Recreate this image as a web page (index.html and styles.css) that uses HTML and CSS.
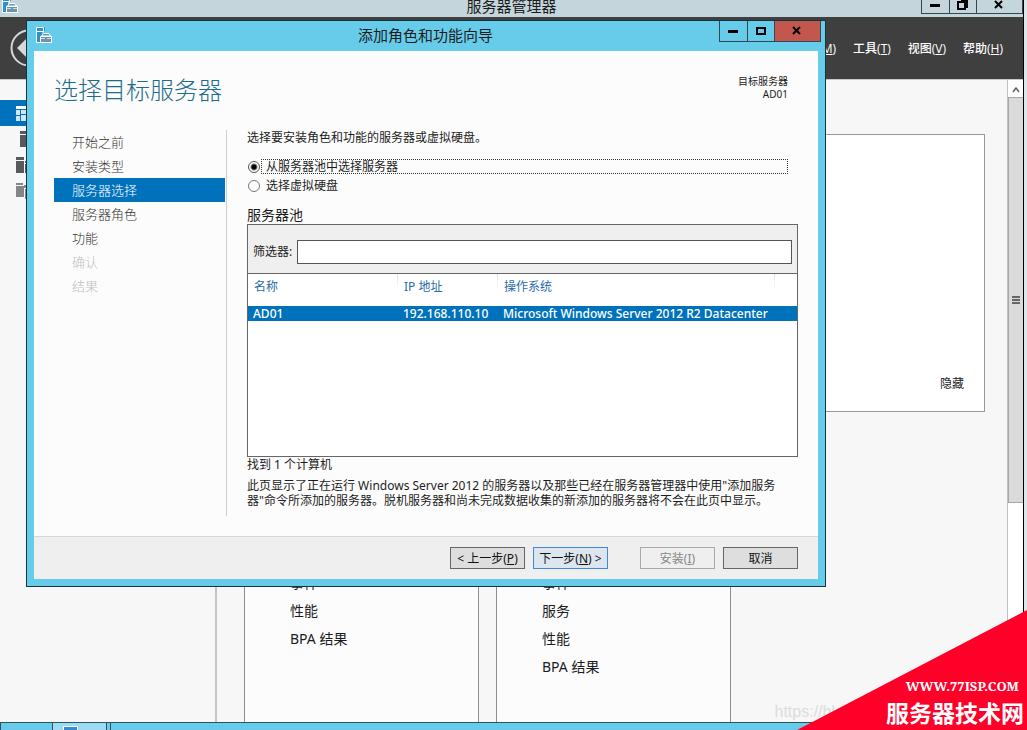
FILE: index.html
```html
<!DOCTYPE html>
<html lang="zh-CN">
<head>
<meta charset="utf-8">
<title>服务器管理器</title>
<link rel="stylesheet" href="styles.css">
</head>
<body>
<svg class="defs" width="0" height="0" aria-hidden="true">
  <symbol id="app-icon" viewBox="0 0 16 16">
    <path d="M0 0h9v4H0z" fill="#2f8fd0"/>
    <path d="M0 4h6v11H0z" fill="#2f8fd0"/>
    <path d="M.5 15.500V.5h7v4h-7M7.500 4.500v1M.5 15.500h4" fill="none" stroke="#fff"/>
    <path d="M4.500 9.500h11v6h-11z" fill="#6f93ab" stroke="#fff"/>
    <path d="M5.500 9l2-2.500h5L14.500 9z" fill="#6f93ab" stroke="#fff"/>
    <path d="M5 11.500h4m2 0h4" stroke="#c9dbe6"/>
  </symbol>
</svg>
<div class="desktop">
  <div class="screen">
    <div class="manager">
      <header class="manager-title">
        <svg class="app-icon" width="16" height="16"><use href="#app-icon"/></svg>
        <h1>服务器管理器</h1>
        <div class="window-buttons">
          <button class="win-btn" aria-label="最小化"><svg width="10" height="10"><path d="M0 4h10v3H0z"/></svg></button>
          <button class="win-btn" aria-label="还原"><svg width="12" height="12"><path d="M1 3h7v7H1zM4 1h6v8" fill="none" stroke="#000" stroke-width="2"/></svg></button>
          <button class="win-btn wide" aria-label="关闭"><svg width="10" height="10"><path d="M1 1l7 7M8 1L1 8" stroke="#000" stroke-width="2"/></svg></button>
        </div>
      </header>
      <div class="command-bar">
        <button class="back" aria-label="后退"><svg width="38" height="38" viewBox="0 0 38 38"><circle cx="19" cy="19" r="17.500" fill="none" stroke="#d8d8d8" stroke-width="2"/><path d="M7 19l10-10v20z" fill="#d8d8d8"/></svg></button>
        <nav class="menu">
          <a href="#">管理(<u>M</u>)</a>
          <a href="#">工具(<u>T</u>)</a>
          <a href="#">视图(<u>V</u>)</a>
          <a href="#">帮助(<u>H</u>)</a>
        </nav>
      </div>
      <div class="manager-body">
        <nav class="sidebar">
          <a class="side-item active" href="#" aria-label="仪表板"><svg width="16" height="16" fill="#cfe6fa"><path d="M0 1h16v3H0z" fill="#fff"/><path d="M0 5h4v5H0zM0 11h4v5H0zM5 5h11v4H5zM5 10h5v6H5zM11 10h5v6h-5z"/></svg></a>
          <a class="side-item inset" href="#" aria-label="本地服务器"><svg width="10" height="16" fill="#595959"><path d="M0 0h10v3H0zM0 4h10v12H0z"/></svg></a>
          <a class="side-item" href="#" aria-label="所有服务器"><svg width="16" height="16" fill="#595959"><path d="M0 0h8v3H0zM0 4h8v12H0zM9 4h7v2H9zM9 7h7v9H9z"/></svg></a>
          <a class="side-item" href="#" aria-label="文件和存储服务"><svg width="16" height="16" fill="#858585"><path d="M0 0h7v2H0zM0 3h8v11H0zM8 2h8v3H8zM9 6h7v10H9z"/></svg></a>
        </nav>
        <main class="dashboard">
          <section class="welcome"><a href="#">隐藏</a></section>
          <div class="tiles">
            <section class="tile"><p>事件</p><p>性能</p><p>BPA 结果</p></section>
            <section class="tile"><p>事件</p><p>服务</p><p>性能</p><p>BPA 结果</p></section>
          </div>
        </main>
        <div class="scrollbar">
          <button class="scroll-up" aria-label="向上滚动"><svg width="8" height="6"><path d="M1 5l3-4 3 4" fill="none" stroke="#606060" stroke-width="1.500"/></svg></button>
          <div class="thumb"><svg width="8" height="8"><path d="M0 0h8v2H0zM0 3h8v2H0zM0 6h8v2H0z" fill="#666"/></svg></div>
          <div class="track"></div>
        </div>
      </div>
    </div>
    <footer class="taskbar">
      <div class="task"></div>
      <div class="task current"><svg width="15" height="7"><path d="M.5 8V.5h14V8" fill="#2f8fd0" stroke="#fff"/></svg></div>
      <div class="task divider"></div>
    </footer>
  </div>

  <div class="dialog" role="dialog" aria-labelledby="wizard-title">
    <header class="dialog-title">
      <svg class="app-icon" width="16" height="16"><use href="#app-icon"/></svg>
      <h2 id="wizard-title">添加角色和功能向导</h2>
      <div class="window-buttons">
        <button class="win-btn" aria-label="最小化"><svg width="10" height="10"><path d="M0 4h10v3H0z"/></svg></button>
        <button class="win-btn" aria-label="最大化"><svg width="10" height="8"><path d="M1 1h8v6H1z" fill="none" stroke="#000" stroke-width="2"/></svg></button>
        <button class="win-btn wide close" aria-label="关闭"><svg width="10" height="10"><path d="M1 1l7 7M8 1L1 8" stroke="#000" stroke-width="2"/></svg></button>
      </div>
    </header>
    <div class="dialog-body">
      <div class="page-head">
        <h3>选择目标服务器</h3>
        <p class="target">目标服务器<br>AD01</p>
      </div>
      <div class="page">
        <nav class="steps">
          <a href="#">开始之前</a>
          <a href="#">安装类型</a>
          <a href="#" class="active">服务器选择</a>
          <a href="#">服务器角色</a>
          <a href="#">功能</a>
          <a class="off">确认</a>
          <a class="off">结果</a>
        </nav>
        <div class="form">
          <p>选择要安装角色和功能的服务器或虚拟硬盘。</p>
          <div class="choices">
            <div class="choice"><input type="radio" name="src" id="src-pool" checked><label for="src-pool" class="focused">从服务器池中选择服务器</label></div>
            <div class="choice"><input type="radio" name="src" id="src-vhd"><label for="src-vhd">选择虚拟硬盘</label></div>
          </div>
          <h4>服务器池</h4>
          <div class="pool">
            <div class="filter"><label for="filter">筛选器:</label><input type="text" id="filter"></div>
            <table>
              <colgroup><col class="c-name"><col class="c-ip"><col><col class="c-end"></colgroup>
              <thead><tr><th>名称</th><th>IP 地址</th><th>操作系统</th><th></th></tr></thead>
              <tbody><tr><td>AD01</td><td>192.168.110.10</td><td colspan="2">Microsoft Windows Server 2012 R2 Datacenter</td></tr></tbody>
            </table>
          </div>
          <p class="count">找到 1 个计算机</p>
          <p class="note">此页显示了正在运行 Windows Server 2012 的服务器以及那些已经在服务器管理器中使用"添加服务器"命令所添加的服务器。脱机服务器和尚未完成数据收集的新添加的服务器将不会在此页中显示。</p>
        </div>
      </div>
      <div class="actions">
        <button>&lt; 上一步(<u>P</u>)</button>
        <button class="default">下一步(<u>N</u>) &gt;</button>
        <button class="install" disabled>安装(<u>I</u>)</button>
        <button>取消</button>
      </div>
    </div>
  </div>

  <div class="watermark">https://bl</div>
  <div class="corner">
    <span class="site">WWW.77ISP.COM</span>
    <span class="name">服务器技术网</span>
  </div>
</div>
</body>
</html>
```
FILE: styles.css
```css
* { box-sizing: border-box; }
body, h1, h2, h3, h4, p { margin: 0; font-weight: 400; }
body {
  font: 12px/15px "Noto Sans", "Noto Sans CJK SC", sans-serif;
  color: #1c1c1c;
  overflow: hidden;
}
a { color: inherit; text-decoration: none; }
button, input { font: inherit; margin: 0; padding: 0; border-radius: 0; }
u { text-underline-offset: 1px; }
.defs { position: absolute; }

.desktop { position: relative; height: 100vh; background: #dfe6ea; overflow: hidden; }
.screen { height: 100%; display: flex; flex-direction: column; margin-right: 3px; }
.manager { flex: 1; min-height: 0; display: flex; flex-direction: column; border-right: 1px solid #000; }

.manager-title {
  display: flex; align-items: flex-start; justify-content: space-between;
  height: 17px; padding: 0 0 0 2px; background: #c4d6dc;
}
.manager-title .app-icon { margin-top: -3px; }
.manager-title h1 { font-size: 15px; line-height: 13px; margin-left: 84px; }
.manager-title .win-btn { height: 14px; border-top: 0; }
.manager-title .win-btn svg { margin-bottom: 4px; }
.window-buttons { display: flex; }
.win-btn {
  display: flex; align-items: center; justify-content: center;
  width: 29px; height: 22px; background: none; border: 1px solid #33474f; border-top-color: transparent;
}
.win-btn + .win-btn { width: 27px; border-left: 0; }
.win-btn + .wide { width: 46px; }
.win-btn.close { background: #c4574d; }

.command-bar {
  display: flex; align-items: center; justify-content: space-between;
  height: 62px; padding: 0 20px 0 10px; background: #3f3f3f; color: #fff;
}
.back { width: 38px; height: 38px; border: 0; background: none; }
.menu { display: flex; gap: 17px; font-family: "Open Sans", "Noto Sans CJK SC", sans-serif; font-weight: 500; }

.manager-body { flex: 1; min-height: 0; display: flex; background: #f7f7f7; border-top: 1px solid #c8c8c8; }
.sidebar { width: 217px; padding-top: 20px; border-right: 2px solid #c6c6c6; }
.side-item { display: flex; align-items: center; height: 26px; padding-left: 16px; }
.side-item.inset { padding-left: 20px; }
.side-item.active { background: #0072bc; }
.dashboard { flex: 1; display: flex; flex-direction: column; padding: 54px 22px 0 27px; }
.welcome {
  display: flex; align-items: flex-end; justify-content: flex-end;
  height: 278px; padding: 20px; background: #fff; border: 1px solid #999;
}
.tiles { flex: 1; display: flex; gap: 17px; margin-top: 100px; }
.tile { width: 235px; padding: 56px 45px 0; background: #fcfcfc; border: solid #8f8f8f; border-width: 1px 1px 0; font-size: 14px; line-height: 28px; }

.scrollbar { width: 16px; display: flex; flex-direction: column; border-left: 1px solid #c0c0c0; background: #fff; }
.scroll-up { height: 17px; border: 0; background: #fff; }
.thumb {
  display: flex; align-items: center; justify-content: center;
  height: 406px; background: #dadada; border: 1px solid #a6a6a6; border-right: 0;
}
.track { flex: 1; }

.taskbar { display: flex; height: 8px; margin-right: -3px; background: #67cbea; border-top: 1px solid #30525e; }
.task { width: 52px; border-left: 1px solid #30525e; }
.task.current { display: flex; justify-content: flex-start; width: 55px; padding: 3px 0 0 10px; background: #9bdcf3; border-right: 1px solid #30525e; }
.task.divider { width: 4px; border-left: 0; border-right: 1px solid #30525e; }

.dialog { position: absolute; top: 20px; left: 26px; right: 201px; padding: 0 7px 7px; background: #67cbea; border: 1px solid #16343f; }
.dialog-title { display: flex; align-items: flex-start; justify-content: space-between; height: 30px; padding-left: 2px; }
.dialog-title .app-icon { margin-top: 6px; }
.dialog-title h2 { font-size: 15px; line-height: 28px; margin-left: 80px; }
.dialog-title .window-buttons { margin-right: -3px; }
.dialog-title .win-btn { height: 21px; border-top: 0; }

.dialog-body { background: #fcfcfc; }
.page-head { display: flex; justify-content: space-between; padding: 24px 30px 0 20px; height: 79px; }
.page-head h3 { font-size: 24px; line-height: 30px; font-weight: 300; color: #1c6c8c; }
.target { font-size: 10px; line-height: 13px; text-align: right; }
.page { display: flex; gap: 20px; padding: 0 20px 20px; }
.steps { width: 173px; border-right: 1px solid #cfcfcf; font-size: 13px; line-height: 24px; color: #333; font-weight: 300; }
.steps a { display: block; padding-left: 18px; margin-right: 1px; }
.steps .active { background: #0072bc; color: #fff; }
.steps .off { color: #c0c0c0; }
.form { flex: 1; min-width: 0; padding-bottom: 8px; }
.choices { padding: 14px 10px 0 1px; }
.choice { display: flex; align-items: center; gap: 1px; height: 15px; margin-bottom: 4px; }
.choice input {
  appearance: none; flex: none; width: 12px; height: 12px;
  border: 1px solid #777; border-radius: 50%; background: #fff;
}
.choice input:checked { background: radial-gradient(#000 0 2px, #fff 4px); border-color: #555; }
.choice label { flex: 1; line-height: 13px; padding-left: 4px; border: 1px dashed transparent; }
.choice .focused { border: 1px dotted #333; }
.form h4 { font-size: 14px; line-height: 18px; margin-top: 13px; }
.pool { height: 233px; background: #fff; border: 1px solid #666; }
.filter { display: flex; align-items: center; gap: 5px; height: 49px; padding: 5px 5px 0; background: #efefef; border-bottom: 1px solid #666; }
.filter input { flex: 1; min-width: 0; height: 24px; border: 1px solid #555; background: #fff; }
table { width: 100%; table-layout: fixed; border-collapse: collapse; }
.c-name { width: 150px; }
.c-ip { width: 100px; }
.c-end { width: 22px; }
th { height: 32px; padding: 0 0 8px 6px; text-align: left; font-weight: 400; color: #2a6ca8; background: linear-gradient(#ddd, #fff) right top / 1px 14px no-repeat; }
th:last-child { background: none; }
td { height: 15px; padding: 0 0 0 5px; line-height: 15px; background: #0072bc; color: #fff; white-space: nowrap; font-weight: 500; }
.note { margin-top: 6px; }
.actions { display: flex; justify-content: flex-end; gap: 8px; padding: 10px 20px 10px; background: #efefef; border-top: 1px solid #d8d8d8; }
.actions button { width: 75px; height: 22px; background: #dedede; border: 1px solid #666; color: #111; white-space: nowrap; }
.actions .default { border-color: #3c8ad8; background: #dde6ee; }
.actions .install { margin-left: 24px; background: #efefef; border-color: #aaa; color: #888; }

.watermark { position: absolute; right: 192px; bottom: 7px; font: 16px/22px "Liberation Sans", sans-serif; color: #dcdcdc; }
.corner {
  position: absolute; right: 0; bottom: 0; width: 230px; height: 120px;
  display: flex; flex-direction: column; align-items: flex-end; justify-content: flex-end;
  background: #fe0028; color: #fff; clip-path: polygon(100% 0, 100% 100%, 0 100%);
}
.site { font: bold 13px/16px "Noto Serif", "DejaVu Serif", serif; padding-right: 8px; }
.name { font: bold 23px/36px "Noto Sans CJK SC", sans-serif; padding-right: 3px; }
```
